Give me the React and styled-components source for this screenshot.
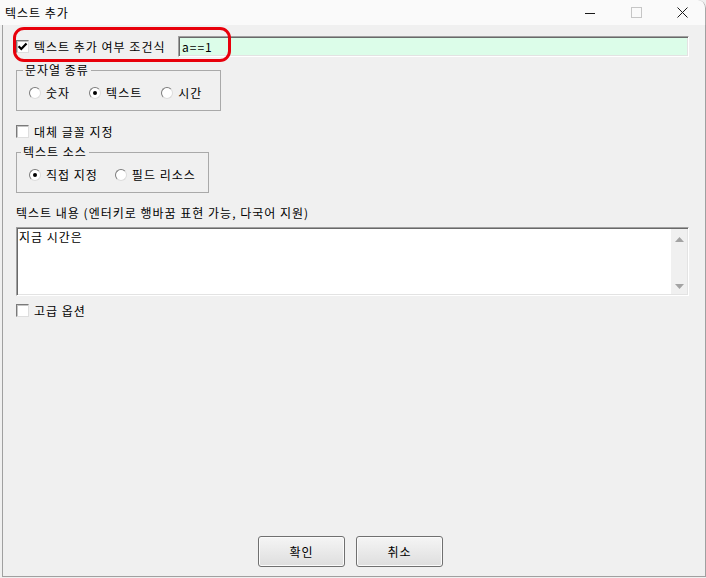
import React from 'react';
import styled, { createGlobalStyle } from 'styled-components';

const Global = createGlobalStyle`
  html, body { margin: 0; padding: 0; background: #f0f0f0; }
  body {
    font-family: "Noto Sans CJK KR", "Noto Sans", "DejaVu Sans", sans-serif;
    font-size: 12px;
    letter-spacing: 1px;
    color: #000;
  }
  * { box-sizing: border-box; }
`;

const Window = styled.div`
  width: 706px;
  height: 578px;
  display: flex;
  flex-direction: column;
  background: #f0f0f0;
  border-top-right-radius: 8px;
  overflow: hidden;
`;

const TitleBar = styled.div`
  height: 25px;
  flex: none;
  display: flex;
  align-items: center;
  background: #fafafa;
  padding-left: 5px;
  border-right: 1px solid #a8a8a8;
  border-top-right-radius: 8px;
`;

const TitleText = styled.span`
  font-size: 12px;
  line-height: 25px;
`;

const Controls = styled.div`
  margin-left: auto;
  display: flex;
  height: 25px;
`;

const CtrlButton = styled.div`
  width: 46px;
  height: 25px;
  display: flex;
  align-items: center;
  justify-content: center;
  color: ${(p) => (p.$disabled ? '#c6c6c6' : '#1a1a1a')};
`;

const Client = styled.div`
  flex: 1;
  display: flex;
  flex-direction: column;
  margin: 0 0 1px 2px;
  border-left: 1px solid #a0a0a0;
  border-right: 1px solid #a0a0a0;
  border-bottom: 1px solid #a0a0a0;
  padding: 0 16px 9px 13px;
`;

const ConditionRow = styled.div`
  position: relative;
  display: flex;
  align-items: center;
  height: 21px;
  margin-top: 11px;
`;

const Highlight = styled.div`
  position: absolute;
  left: -3px;
  top: -9px;
  width: 218px;
  height: 35px;
  border: 3px solid #e8000b;
  border-radius: 11px;
  pointer-events: none;
`;

const CheckRow = styled.div`
  display: flex;
  align-items: center;
  gap: 5px;
  height: 16px;
  margin-top: ${(p) => p.$mt}px;
`;

const CheckBox = styled.span`
  flex: none;
  width: 13px;
  height: 13px;
  background: #fff;
  border: 1px solid;
  border-color: #7a7a7a #dedede #dedede #7a7a7a;
  box-shadow: inset 1px 1px 0 #c4c4c4;
  display: flex;
  align-items: center;
  justify-content: center;
`;

const ConditionLabel = styled.span`
  width: 144px;
  flex: none;
  margin-left: 5px;
  line-height: 16px;
  white-space: nowrap;
`;

const Sunken = styled.div`
  border: 1px solid;
  border-color: #a0a0a0 #ffffff #ffffff #a0a0a0;
  box-shadow: inset 1px 1px 0 #696969, inset -1px -1px 0 #e3e3e3;
`;

const ConditionInput = styled(Sunken)`
  flex: 1;
  height: 21px;
  background: #dcfde9;
  padding: 1px 3px 0;
  line-height: 18px;
  white-space: nowrap;
`;

const GroupBox = styled.fieldset`
  margin: ${(p) => p.$mt}px 0 0 0;
  width: ${(p) => p.$w}px;
  min-width: 0;
  border: 1px solid #a9a9a9;
  padding: 8px 0 9px 12px;
`;

const GroupLegend = styled.legend`
  margin-left: ${(p) => p.$ml}px;
  padding: 0 2px;
  line-height: 14px;
  font-size: 12px;
`;

const RadioRow = styled.div`
  display: flex;
  align-items: center;
  gap: ${(p) => p.$gap}px;
  height: 16px;
`;

const Option = styled.label`
  display: flex;
  align-items: center;
  gap: 5px;
  white-space: nowrap;
  line-height: 16px;
`;

const RadioCircle = styled.span`
  position: relative;
  flex: none;
  width: 12px;
  height: 12px;
  border-radius: 50%;
  background: #fff;
  border: 1px solid;
  border-color: #7c7c7c #dcdcdc #dcdcdc #7c7c7c;
  &::after {
    content: '';
    display: ${(p) => (p.$checked ? 'block' : 'none')};
    position: absolute;
    left: 3px;
    top: 3px;
    width: 4px;
    height: 4px;
    border-radius: 50%;
    background: #000;
  }
`;

const ContentLabel = styled.div`
  margin-top: 12px;
  line-height: 16px;
  white-space: nowrap;
`;

const TextBox = styled(Sunken)`
  margin-top: 6px;
  height: 69px;
  display: flex;
  background: #fff;
`;

const TextContent = styled.div`
  flex: 1;
  padding: 1px 2px;
  line-height: 15px;
`;

const ScrollBar = styled.div`
  width: 16px;
  margin: 1px 1px 1px 0;
  background: #f0f0f0;
  display: flex;
  flex-direction: column;
  align-items: center;
  justify-content: space-between;
  padding: 8px 0 5px;
`;

const Footer = styled.div`
  margin-top: auto;
  display: flex;
  justify-content: center;
  gap: 11px;
  padding-right: 4px;
`;

const Button = styled.div`
  width: 87px;
  height: 31px;
  border: 1px solid #707070;
  border-radius: 3px;
  background: linear-gradient(#f5f5f5, #dedede);
  box-shadow: inset 0 0 0 1px #fbfbfb;
  display: flex;
  align-items: center;
  justify-content: center;
  font-size: 12px;
`;

const Check = () => (
  <svg width="11" height="11" viewBox="0 0 11 11">
    <path d="M1.6 5.2 L4.3 8 L9.5 2.4" fill="none" stroke="#000" strokeWidth="2.2" />
  </svg>
);

const Arrow = ({ down }) => (
  <svg width="9" height="5" viewBox="0 0 9 5">
    <path d={down ? 'M0 0 H9 L4.5 5 Z' : 'M0 5 H9 L4.5 0 Z'} fill="#a3a3a3" />
  </svg>
);

export default function App() {
  return (
    <>
      <Global />
      <Window>
        <TitleBar>
          <TitleText>텍스트 추가</TitleText>
          <Controls>
            <CtrlButton>
              <svg width="10" height="10" viewBox="0 0 10 10">
                <path d="M0 5.5 H10" stroke="currentColor" strokeWidth="1" />
              </svg>
            </CtrlButton>
            <CtrlButton $disabled>
              <svg width="11" height="11" viewBox="0 0 11 11">
                <rect x="0.5" y="0.5" width="10" height="10" fill="none" stroke="currentColor" strokeWidth="1" />
              </svg>
            </CtrlButton>
            <CtrlButton>
              <svg width="11" height="11" viewBox="0 0 11 11">
                <path d="M0.5 0.5 L10.5 10.5 M10.5 0.5 L0.5 10.5" stroke="currentColor" strokeWidth="1" />
              </svg>
            </CtrlButton>
          </Controls>
        </TitleBar>
        <Client>
          <ConditionRow>
            <CheckBox>
              <Check />
            </CheckBox>
            <ConditionLabel>텍스트 추가 여부 조건식</ConditionLabel>
            <ConditionInput>a==1</ConditionInput>
            <Highlight />
          </ConditionRow>

          <GroupBox $w={205} $mt={6}>
            <GroupLegend $ml={-6}>문자열 종류</GroupLegend>
            <RadioRow $gap={19}>
              <Option>
                <RadioCircle />
                숫자
              </Option>
              <Option>
                <RadioCircle $checked />
                텍스트
              </Option>
              <Option>
                <RadioCircle />
                시간
              </Option>
            </RadioRow>
          </GroupBox>

          <CheckRow $mt={12}>
            <CheckBox />
            대체 글꼴 지정
          </CheckRow>

          <GroupBox $w={193} $mt={6}>
            <GroupLegend $ml={-8}>텍스트 소스</GroupLegend>
            <RadioRow $gap={17}>
              <Option>
                <RadioCircle $checked />
                직접 지정
              </Option>
              <Option>
                <RadioCircle />
                필드 리소스
              </Option>
            </RadioRow>
          </GroupBox>

          <ContentLabel>텍스트 내용 (엔터키로 행바꿈 표현 가능, 다국어 지원)</ContentLabel>
          <TextBox>
            <TextContent>지금 시간은</TextContent>
            <ScrollBar>
              <Arrow />
              <Arrow down />
            </ScrollBar>
          </TextBox>

          <CheckRow $mt={6}>
            <CheckBox />
            고급 옵션
          </CheckRow>

          <Footer>
            <Button>확인</Button>
            <Button>취소</Button>
          </Footer>
        </Client>
      </Window>
    </>
  );
}
